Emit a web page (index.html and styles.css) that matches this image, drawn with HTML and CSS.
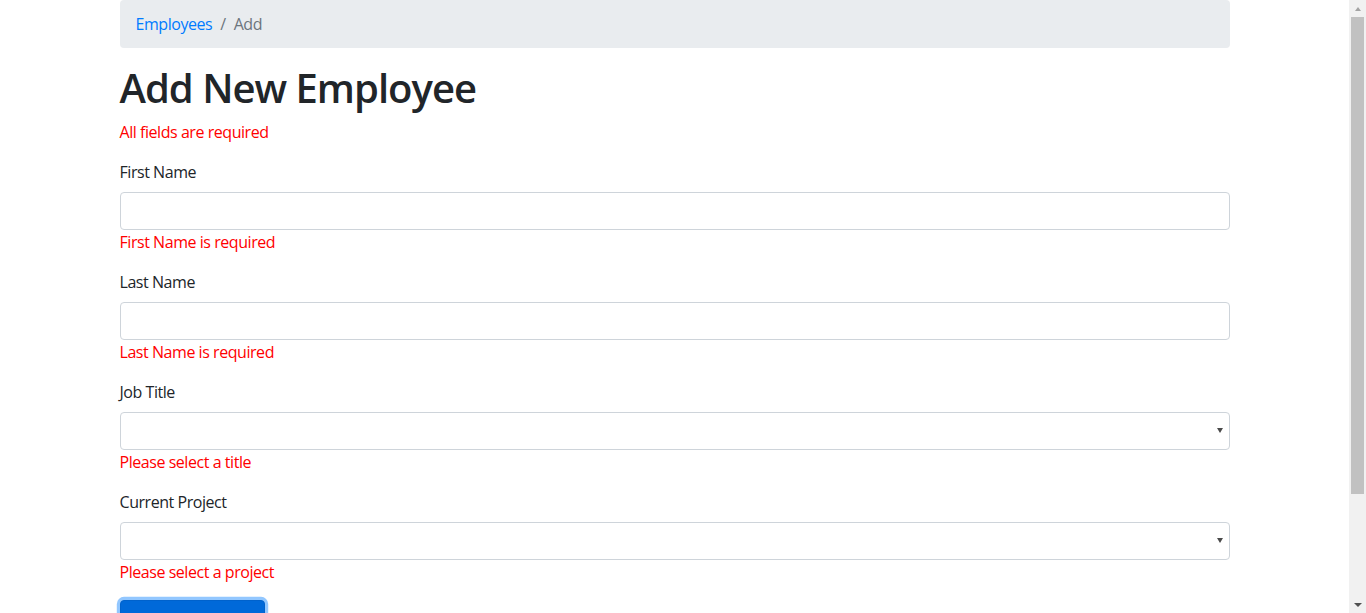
FILE: index.html
```html
<!DOCTYPE html>
<html lang="en">
<head>
<meta charset="utf-8">
<title>Add New Employee</title>
<link rel="stylesheet" href="styles.css">
</head>
<body>
<div class="container">
  <nav class="breadcrumb">
    <a class="crumb-link" href="#">Employees</a>
    <span class="crumb-sep">/</span>
    <span class="crumb-active">Add</span>
  </nav>
  <h1 class="title">Add New Employee</h1>
  <div class="error">All fields are required</div>
  <form class="form">
    <div class="group">
      <label class="label" for="first">First Name</label>
      <input class="control" id="first" type="text">
      <div class="error">First Name is required</div>
    </div>
    <div class="group">
      <label class="label" for="last">Last Name</label>
      <input class="control" id="last" type="text">
      <div class="error">Last Name is required</div>
    </div>
    <div class="group">
      <label class="label" for="title">Job Title</label>
      <div class="select-wrap">
        <select class="control select" id="title"><option></option></select>
      </div>
      <div class="error">Please select a title</div>
    </div>
    <div class="group">
      <label class="label" for="project">Current Project</label>
      <div class="select-wrap">
        <select class="control select" id="project"><option></option></select>
      </div>
      <div class="error">Please select a project</div>
    </div>
    <button class="btn" type="button">Create Employee</button>
  </form>
</div>
<div class="scrollbar" aria-hidden="true">
  <div class="sb-btn"><span class="sb-arrow-up"></span></div>
  <div class="sb-thumb"></div>
  <div class="sb-track"></div>
  <div class="sb-btn"><span class="sb-arrow-down"></span></div>
</div>
</body>
</html>
```

FILE: styles.css
```css
html {
  scrollbar-width: none;
}
html::-webkit-scrollbar {
  display: none;
}
body {
  margin: 0 17px 0 0;
  font-family: "Segoe UI", "Open Sans", "Noto Sans", sans-serif;
  font-size: 16px;
  line-height: 1.5;
  letter-spacing: -0.45px;
  color: #212529;
  background: #fff;
}
.container {
  max-width: 1110px;
  margin: 0 auto;
  padding: 0 15px 104px;
}
.breadcrumb {
  display: flex;
  align-items: center;
  padding: 12px 16px;
  margin-bottom: 16px;
  background: #e9ecef;
  border-radius: 4px;
}
.crumb-link {
  color: #007bff;
  text-decoration: none;
}
.crumb-sep {
  color: #6c757d;
  padding: 0 8px;
}
.crumb-active {
  color: #6c757d;
}
.title {
  margin: 0 0 8px;
  font-size: 40px;
  font-weight: 600;
  line-height: 1.2;
  letter-spacing: -1px;
}
.error {
  color: #ff0000;
}
.form {
  margin-top: 16px;
}
.group {
  margin-bottom: 16px;
}
.label {
  display: inline-block;
  margin-bottom: 8px;
}
.control {
  display: block;
  box-sizing: border-box;
  width: 100%;
  height: 38px;
  padding: 6px 12px;
  font: inherit;
  color: #495057;
  background: #fff;
  border: 1px solid #ced4da;
  border-radius: 4px;
}
.select-wrap {
  position: relative;
}
.select {
  appearance: none;
  -webkit-appearance: none;
}
.select-wrap::after {
  content: "";
  position: absolute;
  right: 7px;
  top: 16px;
  border-left: 3px solid transparent;
  border-right: 3px solid transparent;
  border-top: 5px solid #4a4a4a;
  pointer-events: none;
}
.btn {
  display: inline-block;
  box-sizing: border-box;
  width: 145px;
  padding: 6px 8px;
  font: inherit;
  letter-spacing: -0.6px;
  text-align: center;
  white-space: nowrap;
  color: #fff;
  background: #0069d9;
  border: 1px solid #0062cc;
  border-radius: 4px;
  box-shadow: 0 0 0 3.2px rgba(38, 143, 255, 0.5);
}
.scrollbar {
  position: fixed;
  top: 0;
  right: 0;
  width: 17px;
  height: 100vh;
  background: #f1f1f1;
  display: flex;
  flex-direction: column;
  align-items: center;
}
.sb-btn {
  height: 17px;
  width: 17px;
  display: flex;
  align-items: center;
  justify-content: center;
  flex: none;
}
.sb-arrow-up {
  border-left: 3.5px solid transparent;
  border-right: 3.5px solid transparent;
  border-bottom: 4px solid #a3a3a3;
}
.sb-arrow-down {
  border-left: 4px solid transparent;
  border-right: 4px solid transparent;
  border-top: 4px solid #505050;
}
.sb-thumb {
  width: 13px;
  height: 477px;
  background: #c1c1c1;
  flex: none;
}
.sb-track {
  flex: 1;
}
```
